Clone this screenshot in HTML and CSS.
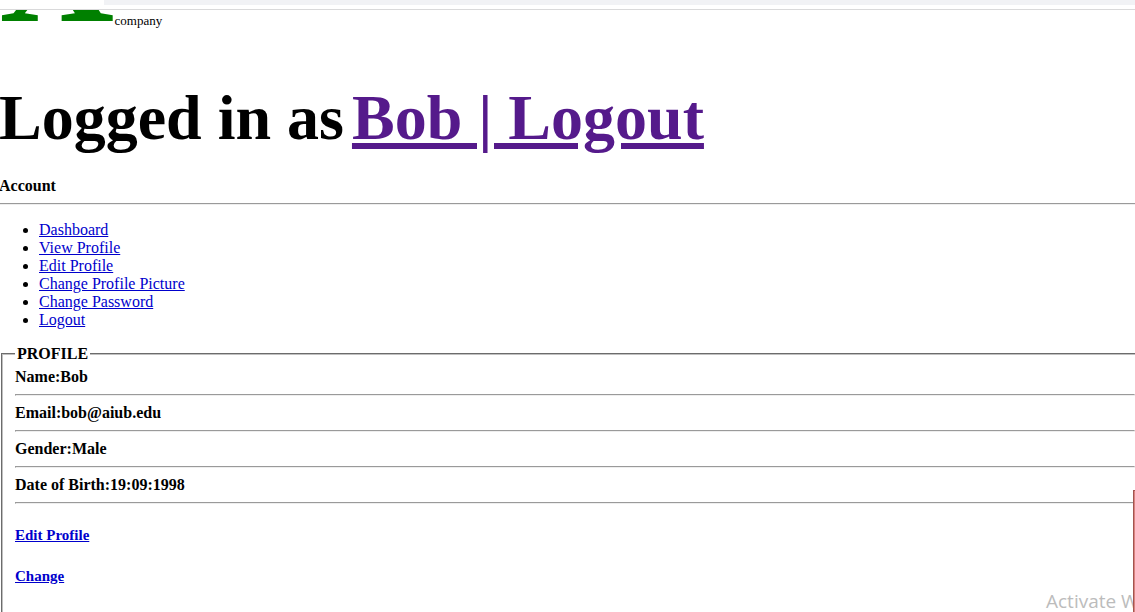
FILE: index.html
```html
<!DOCTYPE html>
<html lang="en">
<head>
<meta charset="utf-8">
<title>Profile</title>
<link rel="stylesheet" href="styles.css">
</head>
<body>
<div class="window-edge"></div>
<main class="page">
  <header class="brand"><span class="brand-mark">X</span><span class="brand-name">company</span></header>
  <h1 class="session"><span>Logged in as</span><a class="session-link" href="#logout">Bob | Logout</a></h1>
  <h2 class="label">Account</h2>
  <hr class="rule">
  <ul class="menu">
    <li><a href="#dashboard">Dashboard</a></li>
    <li><a href="#view">View Profile</a></li>
    <li><a href="#edit">Edit Profile</a></li>
    <li><a href="#picture">Change Profile Picture</a></li>
    <li><a href="#password">Change Password</a></li>
    <li><a href="#logout">Logout</a></li>
  </ul>
  <fieldset class="profile">
    <legend class="profile-title">PROFILE</legend>
    <div class="label">Name:Bob</div>
    <hr class="rule">
    <div class="label">Email:bob@aiub.edu</div>
    <hr class="rule">
    <div class="label">Gender:Male</div>
    <hr class="rule">
    <div class="label">Date of Birth:19:09:1998</div>
    <hr class="rule">
    <p class="action"><a href="#edit">Edit Profile</a></p>
    <p class="action"><a href="#picture">Change</a></p>
  </fieldset>
</main>
<div class="watermark">Activate Windows</div>
<div class="side-mark"></div>
</body>
</html>
```
FILE: styles.css
```css
body {
  margin: 0;
  height: 100vh;
  overflow: hidden;
  position: relative;
  background: #fff;
  color: #000;
  font: 16px/18px "Liberation Serif", "Times New Roman", serif;
}

a {
  color: #0000cc;
}

.window-edge {
  box-sizing: border-box;
  height: 10px;
  border-bottom: 1px solid #d9d9da;
  background: linear-gradient(#f1f2f5, #f1f2f5) 104px 0 / 100% 5px no-repeat;
}

.page {
  margin: 0 -16px 0 -1px;
}

.brand {
  display: flex;
  align-items: flex-start;
  overflow: hidden;
}

.brand-mark {
  margin-top: -131px;
  color: #008000;
  font-size: 160px;
  font-weight: bold;
  line-height: 177px;
}

.brand-name {
  padding-top: 2px;
  font-size: 13px;
}

.session {
  display: flex;
  gap: 8px;
  margin: 25px 0 22px;
  font-size: 64px;
  line-height: 74px;
  white-space: nowrap;
}

.session-link {
  color: #551a8b;
}

.label {
  margin: 0;
  font-size: 16px;
  font-weight: bold;
}

.rule {
  margin: 8px 0;
}

.menu {
  margin: 16px 0;
  padding-left: 40px;
}

.profile {
  margin: 0 2px;
  padding: 5px 12px 60px;
  border: 2px groove #c0c0c0;
}

.profile-title {
  padding: 0 2px;
  font-weight: bold;
}

.action {
  margin: 22px 0;
  font-size: 15px;
  font-weight: bold;
  line-height: 19px;
}

.watermark {
  position: absolute;
  left: calc(100% - 89px);
  bottom: 0;
  color: #bcbcbc;
  font: 19px/22px "Open Sans", "Noto Sans", sans-serif;
  white-space: nowrap;
}

.side-mark {
  position: absolute;
  right: 0;
  bottom: 0;
  width: 2px;
  height: 20%;
  box-sizing: border-box;
  border-top: 1px solid #a35450;
  border-left: 1px solid #a35450;
  background: #d98480;
}
```
